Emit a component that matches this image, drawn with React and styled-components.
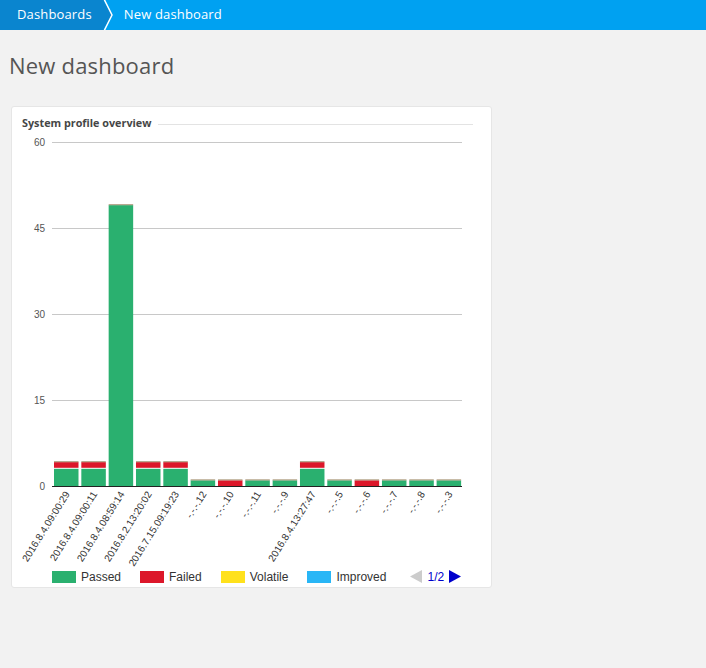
import styled, { createGlobalStyle } from "styled-components";

const GlobalStyle = createGlobalStyle`
  body {
    margin: 0;
    background: #f2f2f2;
    font-family: "Open Sans", "Noto Sans", sans-serif;
  }
`;

const Page = styled.div`
  min-height: 668px;
  background: #f2f2f2;
`;

const Breadcrumbs = styled.nav`
  display: flex;
  height: 30px;
  background: #00a1f1;
`;

const Crumb = styled.div`
  position: relative;
  display: flex;
  align-items: center;
  height: 30px;
  padding: 0 ${(p) => (p.$first ? "12px" : "0")} 3px ${(p) => (p.$first ? "17px" : "20px")};
  box-sizing: border-box;
  background: ${(p) => (p.$first ? "#0a85cf" : "transparent")};
  color: #fff;
  font-size: 13px;
  letter-spacing: 0.15px;
`;

const Chevron = styled.svg`
  position: absolute;
  right: -9px;
  top: 0;
`;

const Title = styled.h1`
  margin: 20px 0 0 9px;
  height: 32px;
  font-size: 22px;
  font-weight: 400;
  color: #555;
  letter-spacing: 0.2px;
`;

const Card = styled.section`
  margin: 24px 0 0 11px;
  width: 479px;
  height: 480px;
  background: #fff;
  border: 1px solid #e6e6e6;
  border-radius: 3px;
`;

const CardHeader = styled.div`
  display: flex;
  align-items: center;
  height: 30px;
  padding: 0 18px 0 10px;
`;

const CardTitle = styled.h2`
  margin: 0;
  font-size: 10.8px;
  font-weight: 700;
  color: #454646;
  white-space: nowrap;
`;

const HeaderRule = styled.div`
  flex: 1;
  margin: 5px 0 0 7px;
  border-top: 1px solid #e3e3e3;
`;

const ChartSvg = styled.svg`
  display: block;
  overflow: visible;
`;

const Legend = styled.div`
  display: flex;
  align-items: center;
  gap: 19px;
  height: 21px;
  padding-left: 40px;
  font-family: "Liberation Sans", Arial, sans-serif;
  font-size: 12px;
  color: #333;
`;

const LegendItem = styled.div`
  display: flex;
  align-items: center;
  gap: 5px;
`;

const Swatch = styled.span`
  width: 24px;
  height: 12px;
  background: ${(p) => p.$color};
`;

const Pager = styled.div`
  display: flex;
  align-items: center;
  gap: 4px;
  margin-left: 5px;
  color: #0000cc;
`;

const COLORS = {
  passed: "#2ab06f",
  failed: "#dc172a",
  volatile: "#ffe11c",
  improved: "#29b6f6",
};

const bars = [
  { label: "2016.8.4.09:00:29", passed: 3, failed: 1 },
  { label: "2016.8.4.09:00:11", passed: 3, failed: 1 },
  { label: "2016.8.4.08:59:14", passed: 49, failed: 0 },
  { label: "2016.8.2.13:20:02", passed: 3, failed: 1 },
  { label: "2016.7.15.09:19:23", passed: 3, failed: 1 },
  { label: "-.-.-.12", passed: 1, failed: 0 },
  { label: "-.-.-.10", passed: 0, failed: 1 },
  { label: "-.-.-.11", passed: 1, failed: 0 },
  { label: "-.-.-.9", passed: 1, failed: 0 },
  { label: "2016.8.4.13:27:47", passed: 3, failed: 1 },
  { label: "-.-.-.5", passed: 1, failed: 0 },
  { label: "-.-.-.6", passed: 0, failed: 1 },
  { label: "-.-.-.7", passed: 1, failed: 0 },
  { label: "-.-.-.8", passed: 1, failed: 0 },
  { label: "-.-.-.3", passed: 1, failed: 0 },
];

const BASE = 349;
const UNIT = 86 / 15;

function Chart() {
  const ticks = [0, 15, 30, 45, 60];
  return (
    <ChartSvg width="479" height="429">
      {ticks.map((t) => {
        const y = Math.round(BASE - t * UNIT) + 0.5;
        return (
          <g key={t}>
            {t > 0 && <line x1="40" x2="450" y1={y} y2={y} stroke="#c8c8c8" />}
            <text
              x="33"
              y={y + 3.5}
              textAnchor="end"
              fontSize="10"
              fontFamily="Liberation Sans, Arial, sans-serif"
              fill="#555"
            >
              {t}
            </text>
          </g>
        );
      })}
      {bars.map((b, i) => {
        const x = 42 + i * 27.33;
        const w = 24.5;
        const ph = b.passed * UNIT;
        const fh = b.failed * UNIT;
        let top = BASE;
        const parts = [];
        if (b.passed) {
          parts.push(<rect key="p" x={x} y={BASE - ph} width={w} height={ph} fill={COLORS.passed} />);
          top = BASE - ph;
        }
        if (b.failed) {
          const gap = b.passed ? 1 : 0;
          parts.push(
            <rect key="f" x={x} y={top - gap - fh} width={w} height={fh} fill={COLORS.failed} />
          );
          top = top - gap - fh;
        }
        const cx = x + w / 2;
        return (
          <g key={i}>
            {parts}
            <rect x={x} y={top - 1} width={w} height="1.2" fill="#b5a48a" />
            <text
              x={cx + 4}
              y={357}
              textAnchor="end"
              fontSize="10"
              fontFamily="Liberation Sans, Arial, sans-serif"
              fill="#333"
              transform={`rotate(-58 ${cx + 4} 357)`}
            >
              {b.label}
            </text>
          </g>
        );
      })}
      <line x1="40" x2="450" y1={BASE + 0.5} y2={BASE + 0.5} stroke="#222" />
    </ChartSvg>
  );
}

export default function App() {
  return (
    <Page>
      <GlobalStyle />
      <Breadcrumbs>
        <Crumb $first>
          Dashboards
          <Chevron width="10" height="30" viewBox="0 0 10 30">
            <path d="M0 0 L9 15 L0 30 Z" fill="#0a85cf" />
            <path d="M1 -1 L9 15 L1 31" fill="none" stroke="#fff" strokeWidth="1.5" />
          </Chevron>
        </Crumb>
        <Crumb>New dashboard</Crumb>
      </Breadcrumbs>
      <Title>New dashboard</Title>
      <Card>
        <CardHeader>
          <CardTitle>System profile overview</CardTitle>
          <HeaderRule />
        </CardHeader>
        <Chart />
        <Legend>
          <LegendItem>
            <Swatch $color={COLORS.passed} />
            Passed
          </LegendItem>
          <LegendItem>
            <Swatch $color={COLORS.failed} />
            Failed
          </LegendItem>
          <LegendItem>
            <Swatch $color={COLORS.volatile} />
            Volatile
          </LegendItem>
          <LegendItem>
            <Swatch $color={COLORS.improved} />
            Improved
          </LegendItem>
          <Pager>
            <svg width="13" height="13" viewBox="0 0 13 13">
              <path d="M12 0 L0 6.5 L12 13 Z" fill="#ccc" />
            </svg>
            1/2
            <svg width="13" height="13" viewBox="0 0 13 13">
              <path d="M1 0 L13 6.5 L1 13 Z" fill="#0000cc" />
            </svg>
          </Pager>
        </Legend>
      </Card>
    </Page>
  );
}
